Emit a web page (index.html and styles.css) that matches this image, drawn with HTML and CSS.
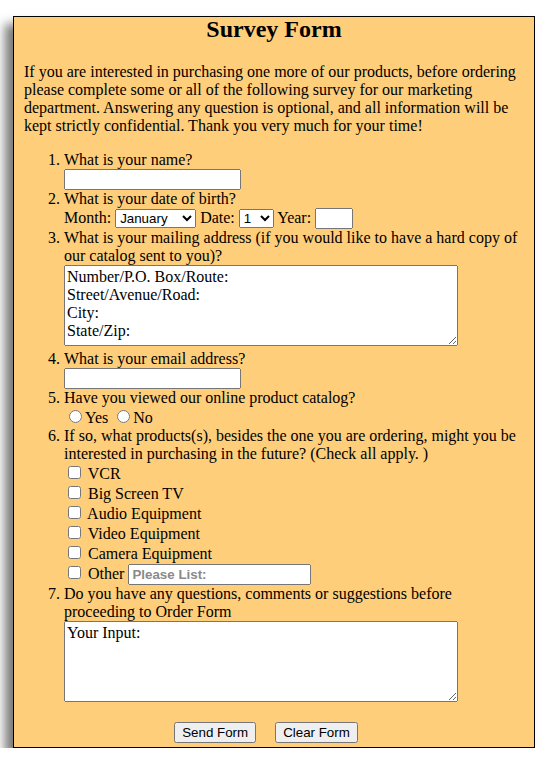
FILE: index.html
```html
<!DOCTYPE html>
<html>
<head>
<meta charset="utf-8">
<title>Survey Form</title>
<link rel="stylesheet" href="styles.css">
</head>
<body>
<form class="survey">
  <h2 class="title">Survey Form</h2>
  <p class="intro">If you are interested in purchasing one more of our products, before ordering please complete some or all of the following survey for our marketing department. Answering any question is optional, and all information will be kept strictly confidential. Thank you very much for your time!</p>
  <ol class="questions">
    <li>What is your name?<br><input type="text" class="field"></li>
    <li>What is your date of birth?<br>Month: <select class="month"><option>January</option><option>February</option><option>March</option><option>April</option><option>May</option><option>June</option><option>July</option><option>August</option><option>September</option><option>October</option><option>November</option><option>December</option></select> Date: <select class="day"><option>1</option><option>2</option><option>31</option></select> Year: <input type="text" class="year"></li>
    <li>What is your mailing address (if you would like to have a hard copy of our catalog sent to you)?<br><textarea class="area">Number/P.O. Box/Route:
Street/Avenue/Road:
City:
State/Zip:</textarea></li>
    <li>What is your email address?<br><input type="text" class="field"></li>
    <li>Have you viewed our online product catalog?<br><input type="radio" name="viewed">Yes <input type="radio" name="viewed">No</li>
    <li>If so, what products(s), besides the one you are ordering, might you be interested in purchasing in the future? (Check all apply. )<br>
      <input type="checkbox"> VCR<br>
      <input type="checkbox"> Big Screen TV<br>
      <input type="checkbox"> Audio Equipment<br>
      <input type="checkbox"> Video Equipment<br>
      <input type="checkbox"> Camera Equipment<br>
      <input type="checkbox"> Other <input type="text" class="other" placeholder="Please List:"></li>
    <li>Do you have any questions, comments or suggestions before proceeding to Order Form<br><textarea class="area">Your Input:</textarea></li>
  </ol>
  <div class="actions">
    <button type="button">Send Form</button>
    <button type="reset">Clear Form</button>
  </div>
</form>
</body>
</html>
```
FILE: styles.css
```css
html, body {
  margin: 0;
  padding: 0;
  background: #ffffff;
}
body {
  font-family: "Liberation Serif", "Times New Roman", serif;
  font-size: 16px;
  color: #000;
}
.survey {
  margin: 16px 15px 0 13px;
  border: 1px solid #000;
  background: #ffce7a;
  padding: 0 10px 4px 10px;
  box-shadow: -8px 8px 10px #777;
}
.title {
  font-size: 24px;
  line-height: 24px;
  font-weight: bold;
  text-align: center;
  margin: 0 0 22px;
}
.intro {
  margin: 0 0 16px;
}
.questions {
  margin: 16px 0;
  padding-left: 40px;
}
input, select, button {
  font-family: "Liberation Sans", Arial, sans-serif;
  font-size: 13.333px;
}
.field {
  width: 177px;
  height: 21px;
  box-sizing: border-box;
}
.month {
  width: 81px;
}
.day {
  width: 35px;
}
.year {
  width: 38px;
  height: 21px;
  box-sizing: border-box;
}
.other {
  width: 183px;
  height: 21px;
  box-sizing: border-box;
  font-weight: bold;
}
.other::placeholder {
  color: #8a8a8a;
}
.area {
  width: 394px;
  height: 81px;
  box-sizing: border-box;
  font-family: "Liberation Serif", "Times New Roman", serif;
  font-size: 16px;
}
.actions {
  display: flex;
  justify-content: center;
  gap: 19px;
  padding-right: 16px;
}
```
